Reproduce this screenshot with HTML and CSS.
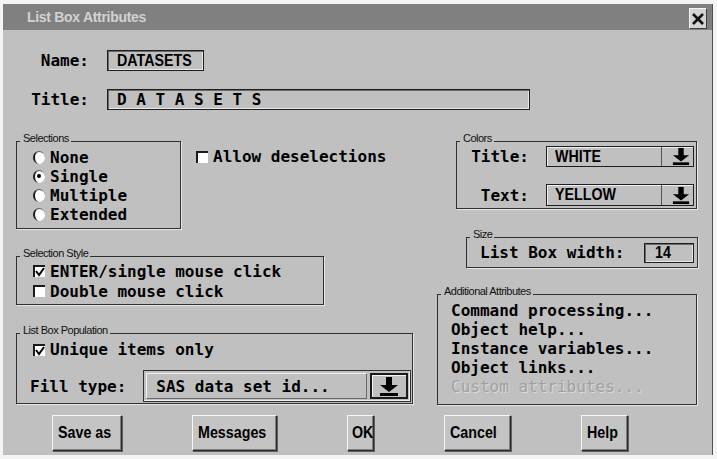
FILE: index.html
```html
<!DOCTYPE html>
<html lang="en">
<head>
  <meta charset="UTF-8" />
  <title>List Box Attributes</title>
  <link rel="stylesheet" href="styles.css">
</head>
<body>

<div class="window">
  <div class="titlebar">
    <span class="title">List Box Attributes</span>
    <span class="close">
      <svg width="12" height="12" viewBox="0 0 12 12"><path d="M1 1 L11 11 M11 1 L1 11" stroke="#111" stroke-width="2.6"/></svg>
    </span>
  </div>

  <div class="fields">
    <label class="lbl">Name:</label>
    <div class="field name-field"><span class="narrow">DATASETS</span></div>
    <label class="lbl">Title:</label>
    <div class="field title-field">D A T A S E T S</div>
  </div>

  <div class="middle">
    <div class="col-left">
      <div class="sel-row">
        <div class="group selections">
          <span class="legend">Selections</span>
          <div class="item"><span class="radio"></span>None</div>
          <div class="item"><span class="radio on"></span>Single</div>
          <div class="item"><span class="radio"></span>Multiple</div>
          <div class="item"><span class="radio"></span>Extended</div>
        </div>
        <div class="item allow"><span class="check"></span>Allow deselections</div>
      </div>

      <div class="group sel-style">
        <span class="legend">Selection Style</span>
        <div class="item"><span class="check"><svg width="10" height="10" viewBox="0 0 10 10"><path d="M1 4 L4 8 L9 1" fill="none" stroke="#000" stroke-width="2"/></svg></span>ENTER/single mouse click</div>
        <div class="item"><span class="check"></span>Double mouse click</div>
      </div>

      <div class="group population">
        <span class="legend">List Box Population</span>
        <div class="item"><span class="check"><svg width="10" height="10" viewBox="0 0 10 10"><path d="M1 4 L4 8 L9 1" fill="none" stroke="#000" stroke-width="2"/></svg></span>Unique items only</div>
        <div class="fill-row">
          <span class="lbl">Fill type:</span>
          <div class="fill-select">
            <div class="fill-value">SAS data set id...</div>
            <div class="fill-btn">
              <svg width="20" height="21" viewBox="0 0 20 21"><rect x="7" y="1" width="6" height="9" fill="#000"/><polygon points="1,9 19,9 10,16" fill="#000"/><rect x="1" y="17" width="18" height="3" fill="#000"/></svg>
            </div>
          </div>
        </div>
      </div>
    </div>

    <div class="col-right">
      <div class="group colors">
        <span class="legend">Colors</span>
        <span class="lbl">Title:</span>
        <div class="select">
          <div class="select-value"><span class="narrow">WHITE</span></div>
          <div class="select-btn">
            <svg width="18" height="19" viewBox="0 0 20 21"><rect x="7" y="1" width="6" height="9" fill="#000"/><polygon points="1,9 19,9 10,16" fill="#000"/><rect x="1" y="17" width="18" height="3" fill="#000"/></svg>
          </div>
        </div>
        <span class="lbl">Text:</span>
        <div class="select">
          <div class="select-value"><span class="narrow">YELLOW</span></div>
          <div class="select-btn">
            <svg width="18" height="19" viewBox="0 0 20 21"><rect x="7" y="1" width="6" height="9" fill="#000"/><polygon points="1,9 19,9 10,16" fill="#000"/><rect x="1" y="17" width="18" height="3" fill="#000"/></svg>
          </div>
        </div>
      </div>

      <div class="group size">
        <span class="legend">Size</span>
        <span class="lbl">List Box width:</span>
        <div class="field width-field"><span class="narrow">14</span></div>
      </div>

      <div class="group additional">
        <span class="legend">Additional Attributes</span>
        <div class="item">Command processing...</div>
        <div class="item">Object help...</div>
        <div class="item">Instance variables...</div>
        <div class="item">Object links...</div>
        <div class="item disabled">Custom attributes...</div>
      </div>
    </div>
  </div>

  <div class="buttons">
    <button class="btn save"><span class="narrow">Save as</span></button>
    <button class="btn messages"><span class="narrow">Messages</span></button>
    <button class="btn ok"><span class="narrow">OK</span></button>
    <button class="btn cancel"><span class="narrow">Cancel</span></button>
    <button class="btn help"><span class="narrow">Help</span></button>
  </div>
</div>

</body>
</html>
```

FILE: styles.css
```css
* {
  box-sizing: border-box;
}

body {
  margin: 0;
  background: #f4f4f4;
  font-family: 'DejaVu Sans Mono', monospace;
  font-weight: bold;
  font-size: 16px;
  color: #000;
}

.window {
  margin: 4px 0 0 3px;
  width: 710px;
  height: 451px;
  background: #c0c0c0;
  border-right: 1px solid #505050;
  overflow: hidden;
}

.titlebar {
  height: 26px;
  background: #808080;
  display: flex;
  align-items: center;
  justify-content: space-between;
  padding: 0 5px 0 24px;
}

.title {
  font-family: 'Liberation Sans', Arial, sans-serif;
  font-size: 14px;
  letter-spacing: -0.3px;
  color: #d2d2d2;
}

.close {
  width: 18px;
  height: 21px;
  margin-top: 3px;
  background: #d4d4d4;
  border: 1px solid;
  border-color: #f4f4f4 #404040 #404040 #f4f4f4;
  display: flex;
  align-items: center;
  justify-content: center;
}

/* tall, narrow face for values and buttons */
.narrow {
  display: inline-block;
  font-family: 'Liberation Sans', Arial, sans-serif;
  font-weight: bold;
  font-size: 17px;
  transform: scaleX(0.84);
  transform-origin: left center;
  white-space: pre;
}

.fields {
  display: grid;
  grid-template-columns: 86px auto;
  column-gap: 18px;
  row-gap: 18px;
  margin-top: 20px;
  justify-content: start;
  align-items: center;
}

.lbl {
  text-align: right;
  white-space: pre;
}

.field {
  height: 21px;
  border: 1px solid #1e1e1e;
  box-shadow: inset 1px 1px 0 #6a6a6a, inset -1px -1px 0 #e8e8e8;
  display: flex;
  align-items: center;
  padding-left: 9px;
  white-space: pre;
}

.name-field {
  width: 97px;
}

.title-field {
  width: 423px;
}

.middle {
  display: flex;
  justify-content: space-between;
  margin-top: 31px;
  padding: 0 14px 0 13px;
}

.col-left {
  width: 397px;
}

.col-right {
  width: 261px;
  display: flex;
  flex-direction: column;
  align-items: flex-end;
}

.group {
  position: relative;
  border: 1px solid #303030;
  box-shadow: 1px 1px 0 #e6e6e6;
}

.legend {
  position: absolute;
  top: -9px;
  left: 3px;
  padding: 0 2px 0 3px;
  background: #c0c0c0;
  font-family: 'Liberation Sans', Arial, sans-serif;
  font-weight: normal;
  font-size: 11px;
  letter-spacing: -0.5px;
  line-height: 11px;
  color: #111;
}

.item {
  display: flex;
  align-items: center;
  height: 19px;
  white-space: pre;
}

.radio {
  width: 12px;
  height: 13px;
  margin-right: 5px;
  border-radius: 50%;
  background: #fff;
  border-left: 2px solid #1a1a1a;
  border-top: 1px solid #555;
  position: relative;
}

.radio.on::after {
  content: '';
  position: absolute;
  left: 2px;
  top: 3px;
  width: 4px;
  height: 4px;
  border-radius: 50%;
  background: #000;
}

.check {
  width: 12px;
  height: 12px;
  margin-right: 5px;
  background: #fff;
  border-left: 2px solid #1a1a1a;
  border-top: 2px solid #1a1a1a;
  display: flex;
  align-items: center;
  justify-content: center;
}

.sel-row {
  display: flex;
  align-items: flex-start;
}

.selections {
  width: 165px;
  height: 88px;
  padding: 6px 0 0 16px;
}

.allow {
  margin: 6px 0 0 15px;
}

.sel-style {
  width: 308px;
  height: 49px;
  margin-top: 27px;
  padding: 4px 0 0 16px;
}

.sel-style .item {
  height: 20px;
}

.population {
  width: 397px;
  height: 71px;
  margin-top: 28px;
  padding: 6px 0 0 16px;
}

.fill-row {
  display: flex;
  align-items: center;
  margin: 11px 0 0 -3px;
}

.fill-select {
  width: 268px;
  height: 32px;
  margin-left: 17px;
  display: flex;
  gap: 3px;
  padding: 2px;
  border: 1px solid #303030;
  box-shadow: inset -1px -1px 0 #f0f0f0;
}

.fill-value {
  flex: 1;
  display: flex;
  align-items: center;
  padding-left: 9px;
  border: 1px solid;
  border-color: #f2f2f2 #6a6a6a #6a6a6a #f2f2f2;
  white-space: pre;
}

.fill-btn {
  width: 38px;
  border: 2px solid #1a1a1a;
  box-shadow: inset 1px 1px 0 #f2f2f2;
  display: flex;
  align-items: center;
  justify-content: center;
}

.colors {
  width: 241px;
  height: 68px;
  margin-right: 1px;
  display: grid;
  grid-template-columns: 72px 148px;
  grid-template-rows: 21px 22px;
  column-gap: 17px;
  row-gap: 17px;
  padding-top: 4px;
  align-items: center;
}

.select {
  height: 100%;
  display: flex;
  border: 1px solid #1e1e1e;
  box-shadow: inset 1px 1px 0 #f0f0f0;
}

.select-value {
  flex: 1;
  display: flex;
  align-items: center;
  padding-left: 8px;
  border-right: 1px solid #555;
}

.select-btn {
  width: 31px;
  display: flex;
  align-items: center;
  justify-content: flex-end;
  padding-right: 3px;
}

.size {
  width: 232px;
  height: 31px;
  margin-top: 28px;
  display: flex;
  align-items: center;
  padding-left: 13px;
}

.width-field {
  width: 50px;
  height: 20px;
  margin-left: 19px;
  padding-left: 10px;
}

.additional {
  width: 260px;
  height: 111px;
  margin: 26px 1px 0 0;
  padding: 6px 0 0 13px;
}

.item.disabled {
  color: #a0a0a0;
  font-weight: normal;
  text-shadow: 1px 1px 0 #dcdcdc;
}

.buttons {
  display: flex;
  gap: 70px;
  margin-top: 10px;
  padding-left: 49px;
}

.btn {
  height: 36px;
  padding: 0 0 0 5px;
  text-align: left;
  background: #c4c4c4;
  border: 1px solid;
  border-color: #f6f6f6 #2a2a2a #2a2a2a #f6f6f6;
  box-shadow: inset -1px -1px 0 #808080, 1px 1px 0 #606060;
  color: #000;
}

.save { width: 70px; }
.messages { width: 85px; }
.ok { width: 27px; padding-left: 4px; }
.cancel { width: 67px; }
.help { width: 47px; }
```
